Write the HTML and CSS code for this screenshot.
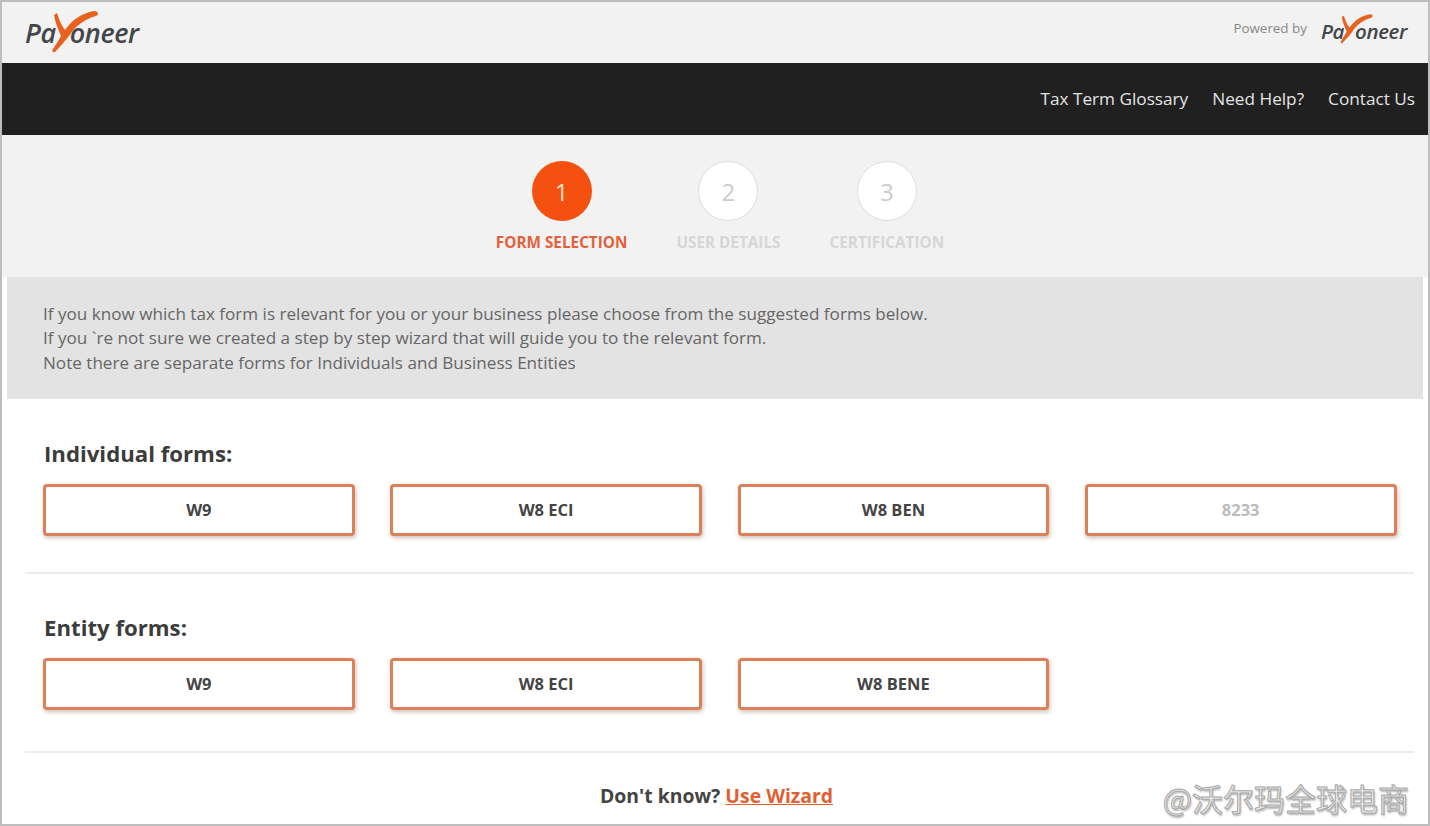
FILE: index.html
```html
<!DOCTYPE html>
<html lang="en">

<head>
    <meta charset="UTF-8">
    <meta name="viewport" content="width=device-width, initial-scale=1.0">
    <title>Payoneer - Form Selection</title>
    <link rel="stylesheet" href="styles.css">
</head>

<body>

    <div class="frame">
        <header class="top-bar">
            <div class="logo logo-large">
                <span>Pa</span>
                <span class="logo-rest">oneer</span>
                <svg class="logo-mark" viewBox="0 0 50 42" aria-hidden="true">
                    <path d="M4 4 L7 2 C9 9 12 15 15 19 C22 9 32 2 44 0 C49 0 49 4 46 5 C35 8 25 15 19 25 C14 31 9 37 5 41 C2 42 2 40 3 38 C6 33 9 29 11 25 C8 18 5 11 4 4 Z" />
                </svg>
            </div>
            <div class="powered">
                <span class="powered-text">Powered by</span>
                <div class="logo logo-small">
                    <span>Pa</span>
                    <span class="logo-rest">oneer</span>
                    <svg class="logo-mark" viewBox="0 0 50 42" aria-hidden="true">
                        <path d="M4 4 L7 2 C9 9 12 15 15 19 C22 9 32 2 44 0 C49 0 49 4 46 5 C35 8 25 15 19 25 C14 31 9 37 5 41 C2 42 2 40 3 38 C6 33 9 29 11 25 C8 18 5 11 4 4 Z" />
                    </svg>
                </div>
            </div>
        </header>

        <nav class="nav-bar">
            <a href="#">Tax Term Glossary</a>
            <a href="#">Need Help?</a>
            <a href="#">Contact Us</a>
        </nav>

        <section class="steps">
            <div class="step step-active">
                <div class="step-circle">1</div>
                <div class="step-label">FORM SELECTION</div>
            </div>
            <div class="step">
                <div class="step-circle">2</div>
                <div class="step-label">USER DETAILS</div>
            </div>
            <div class="step">
                <div class="step-circle">3</div>
                <div class="step-label">CERTIFICATION</div>
            </div>
        </section>

        <section class="notice">
            <p>If you know which tax form is relevant for you or your business please choose from the suggested forms below.</p>
            <p>If you `re not sure we created a step by step wizard that will guide you to the relevant form.</p>
            <p>Note there are separate forms for Individuals and Business Entities</p>
        </section>

        <main class="content">
            <section class="form-group">
                <h2>Individual forms:</h2>
                <div class="form-row">
                    <button>W9</button>
                    <button>W8 ECI</button>
                    <button>W8 BEN</button>
                    <button class="disabled">8233</button>
                </div>
            </section>

            <section class="form-group form-group-second">
                <h2>Entity forms:</h2>
                <div class="form-row">
                    <button>W9</button>
                    <button>W8 ECI</button>
                    <button>W8 BENE</button>
                </div>
            </section>

            <p class="wizard">Don't know? <a href="#">Use Wizard</a></p>
        </main>

        <div class="watermark">@沃尔玛全球电商</div>
    </div>

</body>

</html>
```

FILE: styles.css
```css
* {
    box-sizing: border-box;
}

body {
    font-family: 'Open Sans', sans-serif;
    background-color: #fff;
    color: #444;
    margin: 0;
}

.frame {
    position: relative;
    height: 826px;
    border: 2px solid #bdbdbd;
    overflow: hidden;
    background-color: #fff;
}

.top-bar {
    display: flex;
    justify-content: space-between;
    align-items: center;
    height: 61px;
    padding: 0 21px 0 23px;
    background-color: #f2f2f2;
}

.logo {
    position: relative;
    display: flex;
    align-items: center;
    font-style: italic;
    font-weight: 600;
    color: #43464a;
}

.logo-large {
    font-size: 27px;
    letter-spacing: -0.4px;
    margin-top: 0;
}

.logo-large .logo-rest {
    margin-left: 14px;
}

.logo-small {
    font-size: 20.5px;
    letter-spacing: -0.4px;
    margin-top: -4px;
}

.logo-small .logo-rest {
    margin-left: 11px;
}

.logo-mark {
    position: absolute;
    fill: #e8611f;
}

.logo-large .logo-mark {
    left: 25px;
    top: -3px;
    width: 50px;
    height: 42px;
}

.logo-small .logo-mark {
    left: 18px;
    top: -3px;
    width: 35px;
    height: 30px;
}

.powered {
    display: flex;
    align-items: center;
    gap: 14px;
}

.powered-text {
    font-size: 13.4px;
    color: #888;
    margin-top: -9px;
}

.nav-bar {
    display: flex;
    justify-content: flex-end;
    align-items: center;
    gap: 24px;
    height: 72px;
    padding: 0 13px 2px 0;
    background-color: #202020;
}

.nav-bar a {
    color: #e4e4e4;
    font-size: 17.2px;
    text-decoration: none;
}

.steps {
    display: flex;
    justify-content: center;
    gap: 49px;
    height: 142px;
    padding: 26px 0 0 10px;
    background-color: #f2f2f2;
}

.step {
    display: flex;
    flex-direction: column;
    align-items: center;
}

.step-circle {
    display: flex;
    justify-content: center;
    align-items: center;
    width: 60px;
    height: 60px;
    border: 1px solid #dedede;
    border-radius: 50%;
    background-color: #fff;
    color: #ccc;
    font-size: 24px;
}

.step-label {
    margin-top: 11px;
    font-size: 15.3px;
    font-weight: 700;
    color: #d6d6d6;
    white-space: nowrap;
}

.step-active .step-circle {
    border: none;
    background-color: #f4500f;
    color: #fde3c8;
}

.step-active .step-label {
    color: #e2613a;
}

.notice {
    height: 122px;
    margin: 0 5px;
    padding: 24.6px 36px 0;
    background-color: #e3e3e3;
    color: #666;
    font-size: 17.1px;
    line-height: 24.5px;
}

.notice p {
    margin: 0;
}

.content {
    padding: 0 14px 0 23px;
}

.form-group {
    height: 175px;
    padding: 40px 0 0 18px;
    border-bottom: 2px solid #ececec;
}

.form-group-second {
    height: 179px;
    padding-top: 39px;
}

.form-group h2 {
    margin: 0 0 15px;
    padding-left: 1px;
    font-size: 22.2px;
    font-weight: 700;
    line-height: 30px;
    color: #3c3c3c;
}

.form-row {
    display: flex;
    gap: 35.6px;
}

.form-row button {
    width: 311.7px;
    height: 52px;
    padding: 0 0 2px;
    border: 3px solid #db8059;
    border-radius: 4px;
    background-color: #fff;
    box-shadow: 1px 2px 4px rgba(120, 70, 40, 0.35);
    color: #444;
    font-family: inherit;
    font-size: 16.5px;
    font-weight: 700;
}

.form-row button.disabled {
    color: #bbb;
}

.wizard {
    margin: 27px 0 0;
    padding-right: 6px;
    text-align: center;
    font-size: 19.4px;
    font-weight: 700;
    line-height: 32px;
    color: #444;
}

.wizard a {
    color: #e2602f;
}

.watermark {
    position: absolute;
    right: 19px;
    bottom: 6px;
    font-family: 'Noto Sans CJK SC', 'Noto Sans', sans-serif;
    font-size: 31px;
    line-height: 40px;
    color: #e8e8e8;
    -webkit-text-stroke: 1px #a8a8a8;
    text-shadow: 1px 2px 2px rgba(0, 0, 0, 0.3);
}
```
